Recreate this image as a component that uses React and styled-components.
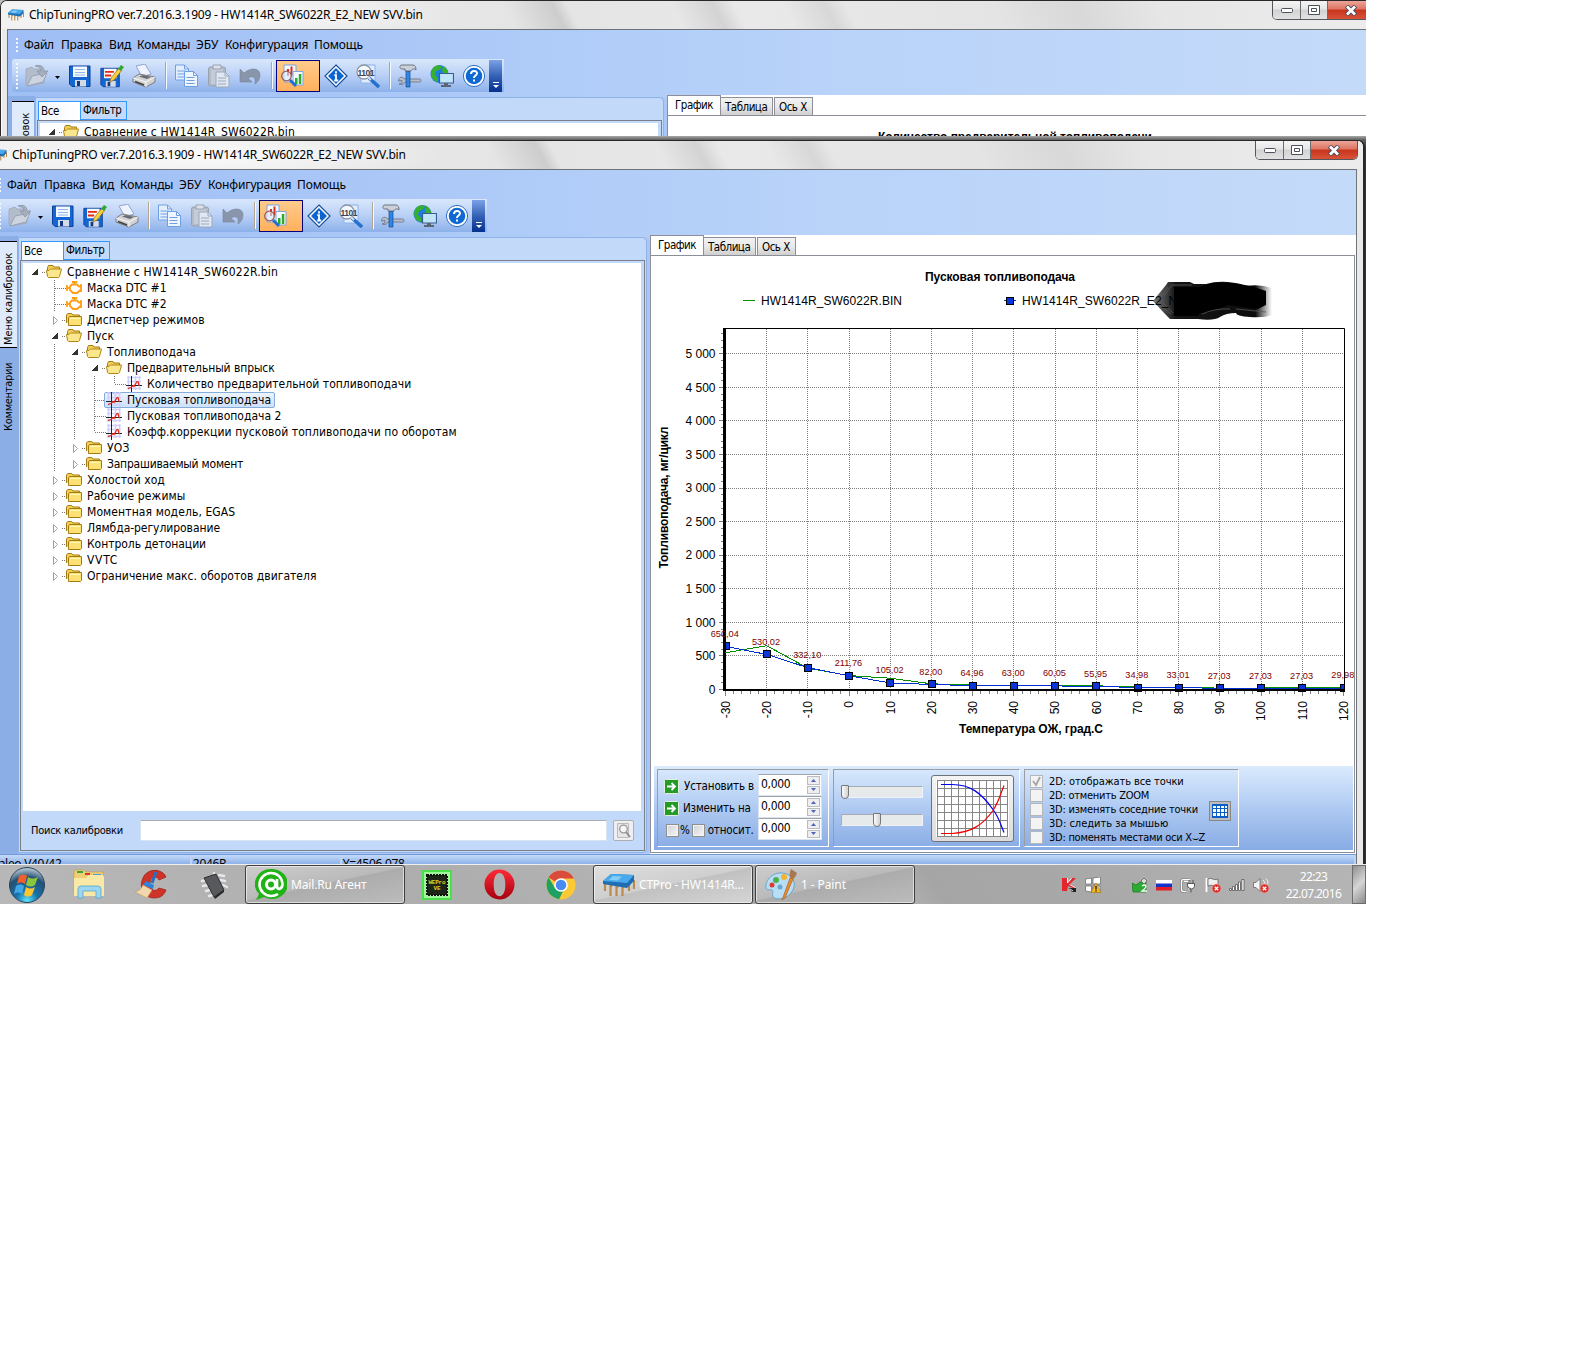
import React from "react";
import styled, { createGlobalStyle, css } from "styled-components";

const tahoma = `"DejaVu Sans Condensed", "DejaVu Sans", sans-serif`;
const segoe = `"Noto Sans", "Open Sans", sans-serif`;
const arial = `"Liberation Sans", Arial, sans-serif`;

const GlobalStyle = createGlobalStyle`
  * { box-sizing: border-box; }
  body {
    margin: 0;
    background: #fff;
    color: #000;
    font: 12px ${tahoma};
  }
  svg { display: block; flex: none; }
`;

const Page = styled.main`
  width: 1592px;
  height: 1360px;
  background: #fff;
`;

const Desktop = styled.div`
  position: relative;
  width: 1366px;
  height: 904px;
  overflow: hidden;
  background: linear-gradient(#bdbdbd 0, #a9a9a9 136px, #5c5c5c 140px, #333 150px);
`;

const BackLayer = styled.div`
  position: absolute;
  left: 0;
  top: 0;
  width: 1366px;
  height: 136px;
  overflow: hidden;
`;

const FrontLayer = styled.div`
  position: absolute;
  left: -17px;
  top: 140px;
  height: 724px;
  overflow: hidden;
`;

const Frame = styled.section`
  width: 1382px;
  height: 740px;
  display: flex;
  flex-direction: column;
  border: 1px solid #2b2628;
  border-right-width: 2px;
  border-radius: 7px 7px 0 0;
  background: #e9e9e9;
  box-shadow: inset 1px 1px 0 #fbfbfb;
  overflow: hidden;
`;

const TitleBar = styled.header`
  height: 28px;
  flex: none;
  display: flex;
  padding-left: 7px;
  font: 12px ${segoe};
  background:
    radial-gradient(ellipse 240px 26px at 220px 14px, rgba(255, 255, 255, 0.75), transparent),
    linear-gradient(62deg, transparent 37%, rgba(0, 0, 0, 0.1) 40.5%, transparent 41.5%,
      transparent 49%, rgba(0, 0, 0, 0.09) 52%, transparent 53.5%, transparent 57%,
      rgba(0, 0, 0, 0.07) 60%, transparent 61.5%, transparent 72%,
      rgba(0, 0, 0, 0.05) 78%, transparent 84%),
    linear-gradient(to right, #f1f1f1, #e4e4e4 40%, #e9e9e9 55%, #e3e3e3 75%, #ececec);

  h1 {
    margin: 0 0 0 5px;
    font: inherit;
    line-height: 28px;
    white-space: nowrap;
    letter-spacing: -0.22px;
  }
  > svg { margin-top: 8px; }
`;

const CaptionButtons = styled.div`
  display: flex;
  margin-left: auto;
  margin-right: 5px;
  height: 19px;
  border: 1px solid #55575f;
  border-top: 0;
  border-radius: 0 0 5px 5px;
  overflow: hidden;
`;

const CaptionButton = styled.span`
  width: ${(p) => p.$width}px;
  display: flex;
  align-items: center;
  justify-content: center;
  border-left: ${(p) => (p.$first ? 0 : "1px solid #6b6b70")};
  background: ${(p) =>
    p.$close
      ? "linear-gradient(#eba598, #dd7461 45%, #c8341c 50%, #d8533a 100%)"
      : "linear-gradient(#f4f4f4, #e6e6e6 45%, #d2d2d2 50%, #e2e2e2)"};
`;

const Client = styled.div`
  flex: 1;
  min-height: 0;
  margin: 0 6px;
  display: flex;
  flex-direction: column;
  border: 1px solid #6f7276;
  border-bottom: 0;
  background: linear-gradient(to right, #9ebef5, #aac7f7 28%, #b9d3f9 62%, #c4daf9);
`;

const MenuBar = styled.nav`
  height: 29px;
  flex: none;
  display: flex;
  align-items: center;
  padding-left: 8px;
  font: 12px ${segoe};
  line-height: 28px;
`;

const MenuItem = styled.a`
  width: ${(p) => p.$width}px;
  white-space: nowrap;
  letter-spacing: ${(p) => p.$tracking || 0}px;
`;

const Grip = styled.i`
  width: 2px;
  height: ${(p) => p.$height}px;
  margin-right: ${(p) => p.$gap}px;
  background: repeating-linear-gradient(#f3f8ff 0 2px, transparent 2px 4px);
`;

const ToolBar = styled.div`
  height: 33px;
  width: 492px;
  flex: none;
  display: flex;
  align-items: center;
  margin-left: 4px;
  padding-left: 4px;
  border-radius: 3px 0 0 3px;
  background: linear-gradient(#d9e7fb, #b9d0f6 50%, #8db1ea);
`;

const Slot = styled.span`
  width: 24px;
  margin-left: ${(p) => p.$gap || 0}px;
  display: flex;
`;

const Divider = styled.i`
  width: 2px;
  height: 27px;
  margin-left: ${(p) => p.$gap}px;
  border-left: 1px solid #b3a58f;
  background: #f4f8ff;
`;

const ActiveTool = styled.span`
  width: 44px;
  height: 32px;
  margin-left: 3px;
  padding: 3px 0 0 3px;
  border: 1px solid #000080;
  background: linear-gradient(#ffcb8c, #ffb05c);
`;

const Overflow = styled.span`
  width: 13px;
  height: 32px;
  margin-left: 3px;
  padding-top: 22px;
  background: linear-gradient(#7ba2e7, #3560b6 50%, #04318f);
`;

const Body = styled.div`
  height: 619px;
  flex: none;
  margin-top: 3px;
  display: grid;
  grid-template-columns: 27px 632px 1fr;
`;

const SideTabs = styled.div`
  padding: 5px 0 0 4px;
  background: #8baee6;
  border-top: 1px solid #9fbff2;
  font-size: 11px;
`;

const SideTab = styled.div`
  width: 22px;
  height: ${(p) => p.$height}px;
  padding-right: 4px;
  padding-bottom: ${(p) => (p.$active ? 9 : 0)}px;
  display: flex;
  align-items: center;
  justify-content: center;
  writing-mode: vertical-rl;
  transform: rotate(180deg);
  white-space: nowrap;
  letter-spacing: ${(p) => (p.$active ? -0.1 : -0.3)}px;
  ${(p) =>
    p.$active &&
    css`
      background: #dfeafa;
      border: solid #000;
      border-width: 1px 0;
    `}
`;

const LeftPanel = styled.div`
  width: 629px;
  height: 616px;
  margin-top: 2px;
  padding: 3px 1px 0;
  display: flex;
  flex-direction: column;
  border: 1px solid #8eb1e6;
  border-radius: 0 5px 4px 0;
  background: #c3d9fa;
  box-shadow: 3px 0 0 #a9c6f4;
`;

const PanelTabs = styled.div`
  height: 19px;
  flex: none;
  display: flex;
  margin-left: 1px;
`;

const PanelTab = styled.span`
  width: ${(p) => p.$width}px;
  padding-left: 2px;
  border: 1px solid #3399ff;
  white-space: nowrap;
  font-size: 11.5px;
  letter-spacing: -0.4px;
  line-height: ${(p) => (p.$active ? 19 : 16)}px;
  border-width: ${(p) => (p.$active ? "1px 0 0 1px" : "1px")};
  background: ${(p) => (p.$active ? "linear-gradient(to right, #f4f9ff, #fff)" : "#c3dafb")};
`;

const PanelBox = styled.div`
  width: 625px;
  height: 591px;
  flex: none;
  padding: 2px 3px 0 2px;
  border: 1px solid #7b8088;
`;

const Tree = styled.div`
  height: 548px;
  padding: 1px 0 0 3px;
  background: #fff;
`;

const TreeRow = styled.div`
  height: 16px;
  display: flex;
`;

const TreeItem = styled.span`
  height: 16px;
  display: flex;
  align-items: center;
  gap: 5px;
  white-space: nowrap;
  letter-spacing: ${(p) => p.$tracking || 0}px;
  ${(p) =>
    p.$selected &&
    css`
      margin-left: -2px;
      padding: 0 3px 0 1px;
      border: 1px solid #84acdd;
      border-radius: 2px;
      background: linear-gradient(#ecf4fd, #cde1fb);
    `}
`;

const Search = styled.label`
  height: 38px;
  display: flex;
  align-items: center;
  padding-left: 8px;
  font-size: 11px;
`;

const SearchCaption = styled.span`
  width: 109px;
  letter-spacing: -0.25px;
`;

const SearchField = styled.span`
  width: 467px;
  height: 21px;
  border: 1px solid #d9e4f3;
  border-top-color: #abadb3;
  background: #fff;
`;

const SearchButton = styled.span`
  width: 21px;
  height: 21px;
  margin-left: 6px;
  padding: 2px;
  border: 1px solid #acafb5;
  border-radius: 2px;
  background: #efefef;
`;

const RightPanel = styled.div`
  display: flex;
  flex-direction: column;
  background: #fff;
`;

const PageTabs = styled.div`
  height: 20px;
  flex: none;
  display: flex;
  align-items: flex-end;
`;

const PageTab = styled.span`
  width: ${(p) => p.$width}px;
  height: ${(p) => (p.$active ? 21 : 18)}px;
  padding-left: ${(p) => (p.$active ? 7 : 4)}px;
  margin-bottom: ${(p) => (p.$active ? -1 : 0)}px;
  margin-right: ${(p) => (p.$active ? 0 : 1)}px;
  border: 1px solid #8c8e98;
  border-bottom: 0;
  border-left-width: ${(p) => (p.$joined ? 0 : 1)}px;
  font-size: 11.5px;
  line-height: ${(p) => (p.$active ? 18 : 19)}px;
  white-space: nowrap;
  letter-spacing: -0.5px;
  background: ${(p) => (p.$active ? "#fff" : "linear-gradient(#f2f2f2, #e9e9e9 50%, #cfcfcf)")};
`;

const TabPage = styled.div`
  width: 705px;
  height: 598px;
  border: 1px solid #8c8e98;
`;

const Controls = styled.div`
  width: 699px;
  height: 84px;
  margin-left: 3px;
  padding: 3px;
  display: flex;
  gap: 4px;
  background: linear-gradient(#dbebfd, #b3cdf3 45%, #87abe4);
`;

const Group = styled.div`
  width: ${(p) => p.$width}px;
  height: 78px;
  padding: ${(p) => p.$padding};
  display: ${(p) => p.$display || "block"};
  border: 1px solid #fff;
  border-top-color: #9a9da3;
  border-left-color: #9a9da3;
`;

const EditRow = styled.div`
  height: 22px;
  display: flex;
  align-items: center;
  font-size: 11.5px;
`;

const EditLabel = styled.span`
  width: 94px;
  padding: 2px 0 0 ${(p) => p.$inset || 0}px;
  display: flex;
  align-items: center;
  white-space: nowrap;
  letter-spacing: -0.15px;
`;

const Caption = styled.span`
  margin-left: ${(p) => p.$gap}px;
`;

const NumberField = styled.span`
  width: 64px;
  height: 22px;
  display: flex;
  justify-content: space-between;
  padding: 1px 1px 1px 2px;
  border: 1px solid #d8e3f2;
  border-top-color: #a0a3a8;
  background: #fff;
  font-size: 12px;
  line-height: 17px;
  letter-spacing: -0.3px;
`;

const Spinner = styled.span`
  width: 13px;
  display: grid;
  grid-template-rows: 1fr 1fr;
  gap: 1px;

  i {
    display: flex;
    align-items: center;
    justify-content: center;
    border: 1px solid #b9bcc2;
    background: #eeeef0;
  }
`;

const Check = styled.i`
  width: 13px;
  height: 13px;
  flex: none;
  border: 1px solid ${(p) => (p.$disabled ? "#b4b6ba" : "#8e8f8f")};
  background: ${(p) =>
    p.$disabled ? "#f3f3f3" : "linear-gradient(135deg, #cfd2d6, #f6f6f6)"};
  box-shadow: inset 0 0 0 1px #f4f4f4;
`;

const Sliders = styled.div`
  width: 90px;
  padding-top: 16px;
  display: grid;
  grid-auto-rows: 28px;
`;

const Track = styled.div`
  width: 82px;
  height: 12px;
  padding-left: ${(p) => p.$value}px;
  border: 1px solid #b3b5b9;
  border-color: #a7abb3 #eef3fa #eef3fa #a7abb3;
  background: #e7eaea;

  i {
    display: block;
    width: 8px;
    height: 14px;
    margin: -2px 0 0 -1px;
    border: 1px solid #777;
    border-radius: 1px 1px 4px 4px;
    background: linear-gradient(to right, #fafafa, #d2d2d2);
  }
`;

const CurveButton = styled.div`
  width: 83px;
  height: 67px;
  margin-top: 5px;
  padding: 4px;
  border: 1px solid #70747a;
  border-radius: 3px;
  background: linear-gradient(#f4f4f4, #dcdcdc);
`;

const Options = styled.div`
  width: 179px;
`;

const Option = styled.div`
  height: 14px;
  display: flex;
  align-items: center;
  gap: 6px;
  font-size: 11px;
  white-space: nowrap;
  letter-spacing: ${(p) => p.$tracking || 0}px;
`;

const GridButton = styled.div`
  width: 22px;
  height: 20px;
  margin-top: 27px;
  padding: 2px 2px;
  border: 1px solid #888;
  background: #bdbdbd;
`;

const StatusBar = styled.footer`
  flex: 1;
  display: flex;
  border-top: 1px solid #7399d8;
  background: linear-gradient(#c4dafa, #88ade7 10px);
  font: 12px ${segoe};
`;

const StatusCell = styled.span`
  width: ${(p) => p.$width}px;
  padding-left: 1px;
  line-height: 17px;
  white-space: nowrap;
  letter-spacing: -0.3px;
  border-right: 2px solid #bcd3f7;
`;

/* ---------- taskbar ---------- */

const TaskBar = styled.footer`
  position: absolute;
  left: 0;
  top: 864px;
  width: 1366px;
  height: 40px;
  display: flex;
  align-items: center;
  border-top: 1px solid #efefef;
  background: linear-gradient(55deg, #b8b8b8, #adadad 30%, #b2b2b2 45%, #a4a4a4 47%, #adadad 66%,
    #a5a5a5 68%, #a8a8a8 78%, #b0b0b0 90%, #b5b5b5);
  color: #fff;
  font: 12px ${segoe};
`;

const Pinned = styled.span`
  margin-left: ${(p) => p.$gap}px;
`;

const TaskButton = styled.span`
  width: 160px;
  height: 39px;
  margin-left: ${(p) => p.$gap}px;
  padding-left: 9px;
  display: flex;
  align-items: center;
  gap: 4px;
  border: 1px solid #3f3f3f;
  border-radius: 3px;
  box-shadow: inset 0 0 0 1px rgba(255, 255, 255, 0.55);
  white-space: nowrap;
  letter-spacing: ${(p) => p.$tracking || 0}px;
  background: ${(p) =>
    p.$active
      ? "linear-gradient(168deg, #dedede, #cfcfcf 48%, #c1c1c1 50%, #d5d5d5)"
      : "linear-gradient(168deg, #cdcdcd, #bababa 48%, #acacac 50%, #bcbcbc)"};
`;

const Tray = styled.div`
  width: ${(p) => p.$width}px;
  margin-left: ${(p) => p.$gap};
  display: flex;
  justify-content: space-between;
`;

const Clock = styled.div`
  width: 83px;
  padding-left: 6px;
  text-align: center;
  line-height: 17px;
  letter-spacing: -0.6px;
`;

const ShowDesktop = styled.div`
  width: 14px;
  height: 39px;
  border: 1px solid #6e6e6e;
  background: linear-gradient(135deg, #8f8f8f, #d5d5d5 50%, #8a8a8a);
`;

/* ---------- icons ---------- */

const Icon = ({ size = 24, box = 24, children }) => (
  <svg width={size} height={size} viewBox={`0 0 ${box} ${box}`}>
    {children}
  </svg>
);

const ChipIcon = ({ size = 16 }) => (
  <svg width={size} height={size * 0.75} viewBox="0 0 32 24">
    <path
      d="M4 11l-2-1v8M9.500 13l-2-1v11M15.500 14l-2-1v10M21.500 14l-2-1v10M27 10l-1-1v9M31 7v9"
      fill="none"
      stroke="#b98a4e"
      strokeWidth="2.200"
    />
    <path d="M8 1l23 1v6l-7 7L0 11V8z" fill="#1f6eb4" />
    <path d="M8 1l23 1-7 8L0 8z" fill="#4aa9ea" />
    <path d="M10 3l9 .5-4 4-9-.5z" fill="#83cdf8" />
  </svg>
);

const OpenIcon = () => (
  <Icon>
    <path d="M1 5l6-2 2 2h8l2 4v10L3 22 1 20z" fill="#b3bccb" stroke="#9aa5b6" strokeWidth=".7" />
    <path d="M2 22L7 12l15-3-4 9z" fill="#ccd4e0" stroke="#98a3b5" />
    <path d="M10 2c6-2 9 1 9 5h4l-6 6-5-6h4c0-3-2-4-6-5z" fill="#a4aebd" stroke="#8791a1" strokeWidth=".7" />
  </Icon>
);

const Disk = () => (
  <>
    <path d="M1.500 2h20.500v20.500H4l-2.500-2.500z" fill="#1467d2" stroke="#0b3f98" />
    <path d="M5 2.500h14v10.500H5z" fill="#f6f9ff" />
    <path d="M7 16h11v6.500H7z" fill="#d4dbe7" />
    <path d="M9 17h3v5H9z" fill="#123a87" />
  </>
);

const SaveIcon = () => (
  <Icon>
    <Disk />
    <path d="M7 5.500h10M7 8.500h10M7 11h10" stroke="#8eb9ed" />
  </Icon>
);

const SaveAsIcon = () => (
  <Icon>
    <g transform="translate(-.5 2.500) scale(.9)">
      <Disk />
      <path d="M6 6h10M6 10h7" stroke="#e42a12" strokeWidth="2" />
    </g>
    <path d="M11 14l8-10 3 2-8 10-4 2z" fill="#f5d13c" stroke="#a06a0e" strokeWidth=".7" />
    <path d="M18 5l3-4 3 2-3 4z" fill="#30a830" />
  </Icon>
);

const PrinterIcon = () => (
  <Icon>
    <path d="M4 2l9-2 6 10-9 3z" fill="#eef3ff" stroke="#8fa3cc" />
    <path d="M1 14l6-4 16 3v5l-9 5-13-5z" fill="#d2d2d4" stroke="#7b7d84" />
    <path d="M1 14l13 4 9-5M14 18v5" fill="none" stroke="#f8f8f8" />
    <path d="M3 17.500l9 3.500" stroke="#444" strokeWidth="1.800" />
    <path d="M7 12.500l8 2.500 4-2-8-2z" fill="#696c74" />
  </Icon>
);

const Sheet = ({ x, y, fill, ink }) => (
  <g transform={`translate(${x} ${y})`}>
    <path d="M0 0h9l4 4v11H0z" fill={fill} stroke={ink} />
    <path d="M9 0v4h4M2 6h8M2 9h8M2 12h8" fill="none" stroke={ink} />
  </g>
);

const CopyIcon = () => (
  <Icon>
    <Sheet x={0.5} y={1} fill="#e3eeff" ink="#6e9fe3" />
    <Sheet x={9.5} y={7.5} fill="#eff5ff" ink="#6e9fe3" />
  </Icon>
);

const PasteIcon = () => (
  <Icon>
    <rect x="2.500" y="3" width="17" height="19" rx="2" fill="#b4bbc8" stroke="#98a1b1" />
    <path d="M5 5h12v15H5z" fill="#c5ccd8" />
    <path d="M7 1h8v4H7z" fill="#dde2ea" stroke="#98a1b1" />
    <Sheet x={10} y={8} fill="#e1e7f0" ink="#9ba8bd" />
  </Icon>
);

const UndoIcon = () => (
  <Icon>
    <path d="M2 5l4 4c7-6 16-5 16 2 0 4-2 7-5 9 1-6-1-9-7-6l4 4H2z" fill="#8995aa" stroke="#77849b" strokeWidth=".6" />
  </Icon>
);

const CompareIcon = () => (
  <Icon>
    <path d="M4 1h12v17H4z" fill="#f6faff" stroke="#7fa5db" />
    <path d="M7 5h2v7H7zM10.500 2.500h2v9h-2z" fill="#de2c1c" />
    <path d="M13 7.500h10V21H13z" fill="#f4faff" stroke="#7fa5db" />
    <path d="M15 14h2.500v6H15zM18.800 10h2.500v10h-2.500z" fill="#2eaa2e" />
    <circle cx="6.500" cy="12" r="4.800" fill="#d7eafd" fillOpacity=".65" stroke="#9a5a52" strokeWidth="1.300" />
    <path d="M10 16l6 6" stroke="#1f6fd4" strokeWidth="3" />
  </Icon>
);

const InfoIcon = () => (
  <Icon>
    <path d="M12 1l11 11-11 11L1 12z" fill="#fff" stroke="#1a4f9c" strokeWidth="1.2" />
    <path d="M12 4l8 8-8 8-8-8z" fill="#0b64cf" />
    <path d="M12 7.2v2.2M10.3 11.2H12v5M10.2 16.5h4" fill="none" stroke="#fff" strokeWidth="1.8" />
  </Icon>
);

const BinarySearchIcon = () => (
  <Icon>
    <path d="M5 1h14v18H5z" fill="#e1edff" stroke="#8db2e8" />
    <circle cx="8" cy="8" r="7" fill="#f4f9ff" stroke="#8c98a8" strokeWidth="1.3" />
    <text x="1.500" y="11.500" fontSize="8.500" fontWeight="bold" fill="#3b4252" textLength="17" fontFamily="Liberation Sans">1101</text>
    <path d="M13 14l10 9" stroke="#2470d0" strokeWidth="3.500" />
    <path d="M12 13l3 3" stroke="#ddd" strokeWidth="2" />
  </Icon>
);

const ToolsIcon = () => (
  <Icon>
    <path d="M.5 17c0-4 4-5 6-2h15c2 0 2 3 0 3H7c-2 4-6 2-6 2l3-1V16.500z" fill="#b7bec9" stroke="#5d6676" strokeWidth=".7" />
    <path d="M8 7h4v16H8z" fill="#2f86e4" stroke="#164b97" strokeWidth=".7" />
    <path d="M3 1h12c2 0 3 2 3 5-2-2-4-1-5 1H7V5H4C2 5 1 3 3 1z" fill="#cbd0d8" stroke="#565e6b" strokeWidth=".8" />
  </Icon>
);

const GlobeIcon = () => (
  <Icon>
    <circle cx="9.500" cy="10" r="9" fill="#1c7de2" />
    <path d="M3 4c4-4 8-3 9-1l-3 3-3 1-1 4 3 3v4C2 17-1 10 3 4zM13 2c4 2 5 5 5 7h-5l-1-3z" fill="#39b02c" />
    <path d="M9.500 9.500h14v9.500h-14z" fill="#bfe4fb" stroke="#3a5f8d" strokeWidth="1.2" />
    <path d="M14 19h4v2h3v2H11v-2h3z" fill="#5c6673" />
  </Icon>
);

const HelpIcon = () => (
  <Icon>
    <circle cx="12" cy="12" r="10.6" fill="#fff" stroke="#2a6fc5" />
    <circle cx="12" cy="12" r="8.3" fill="#1069d2" />
    <path d="M9 10c0-4 6-4 6-.7 0 2.3-3 2-3 4.7M12 15.5v2" fill="none" stroke="#fff" strokeWidth="2" />
  </Icon>
);

const FolderIcon = ({ open }) => (
  <Icon size={16} box={16}>
    {open ? (
      <>
        <path d="M1.500 12V3.500l1-2h4.500l1 1.500h5.500v3" fill="#f0cd58" stroke="#a67c12" />
        <path d="M1.500 12.500L.5 6.500h2.500l1.500-1.500h11l-2 7.500-1 1h-10z" fill="#fae68c" stroke="#b38716" />
      </>
    ) : (
      <>
        <path d="M.5 11V3l1.300-1.500h4L7 3h6.500v2" fill="#f0cf57" stroke="#a67c12" />
        <path d="M2.500 13.500V6l1-1.500h12v8l-1 1z" fill="#fbe272" stroke="#a67c12" />
        <path d="M4 6.500h10" stroke="#fff6c4" />
      </>
    )}
  </Icon>
);

const EngineIcon = () => (
  <Icon size={16} box={16}>
    <path
      d="M1 5v6M1 8h3M6 2h5M8.500 2v2.500M4 6.500l2-2h5l2 2h2M4 6v4l3 3h4l4-3.500V7M15 4v8"
      fill="none"
      stroke="#ff9d14"
      strokeWidth="1.800"
    />
  </Icon>
);

const CurveIcon = () => (
  <Icon size={16} box={16}>
    <path d="M1 1.500h14M1 5.500h14M1 12.500h14M2.500 0v14M9.500 0v14M13.500 0v14" stroke="#cfd0fb" strokeWidth="1.500" />
    <path d="M0 9.500h16M5.500 0v16" stroke="#222" />
    <path d="M2 12.500l3-1 2-2 1 1 3-5h1l1 4h1" fill="none" stroke="#e8220f" strokeWidth="1.200" />
  </Icon>
);

const icons = {
  open: <FolderIcon open />,
  closed: <FolderIcon />,
  engine: <EngineIcon />,
  curve: <CurveIcon />,
};

const Guide = ({ line, leaf, last, state }) => (
  <svg width="20" height="16" viewBox="0 0 20 16" shapeRendering="crispEdges">
    {(line || leaf) && (
      <path d={`M8.500 0V${last ? 8 : 16}`} stroke="#777" strokeDasharray="1 1" />
    )}
    {leaf && <path d="M9 8.500h11" stroke="#777" strokeDasharray="1 1" />}
    {state && <path d="M16 8.500h4" stroke="#777" strokeDasharray="1 1" />}
    {state === "open" && <path d="M11.500 5v6h-6z" fill="#333" />}
    {state === "closed" && (
      <path d="M7.500 4.500l4 4-4 4z" fill="#fff" stroke="#a0a0a0" shapeRendering="auto" />
    )}
  </svg>
);

/* ---------- tree ---------- */

const tree = [
  [0, "open", "Сравнение с HW1414R_SW6022R.bin", { tracking: 0.16 }],
  [1, "engine", "Маска DTC #1"],
  [1, "engine", "Маска DTC #2"],
  [1, "closed", "Диспетчер режимов", { tracking: 0.1 }],
  [1, "open", "Пуск"],
  [2, "open", "Топливоподача", { tracking: 0.08 }],
  [3, "open", "Предварительный впрыск", { tracking: -0.08 }],
  [4, "curve", "Количество предварительной топливоподачи", { last: true, tracking: 0.03 }],
  [3, "curve", "Пусковая топливоподача", { selected: true }],
  [3, "curve", "Пусковая топливоподача 2"],
  [3, "curve", "Коэфф.коррекции пусковой топливоподачи по оборотам", { last: true, tracking: 0.08 }],
  [2, "closed", "УОЗ", { tracking: 0.2 }],
  [2, "closed", "Запрашиваемый момент", { tracking: -0.22 }],
  [1, "closed", "Холостой ход", { tracking: 0.05 }],
  [1, "closed", "Рабочие режимы", { tracking: 0.12 }],
  [1, "closed", "Моментная модель, EGAS", { tracking: 0.1 }],
  [1, "closed", "Лямбда-регулирование", { tracking: -0.05 }],
  [1, "closed", "Контроль детонации", { tracking: -0.04 }],
  [1, "closed", "VVTC", { tracking: 0.7 }],
  [1, "closed", "Ограничение макс. оборотов двигателя", { tracking: 0.03 }],
];

const TreeNode = ({ level, kind, label, selected, last, tracking }) => {
  const isFolder = kind === "open" || kind === "closed";
  return (
    <TreeRow>
      {Array.from({ length: level }, (_, i) => (
        <Guide key={i} line={i > 0} />
      ))}
      <Guide leaf={!isFolder} last={last} state={isFolder && kind} />
      <TreeItem $selected={selected} $tracking={tracking}>
        {icons[kind]}
        {label}
      </TreeItem>
    </TreeRow>
  );
};

/* ---------- chart ---------- */

const temperatures = Array.from({ length: 16 }, (_, i) => i * 10 - 30);
const edited = [
  650.04, 530.02, 332.1, 211.76, 105.02, 82, 64.96, 63, 60.05, 55.95, 34.98, 33.01, 27.03, 27.03,
  27.03, 29.98,
];
const original = [555, 660, 325, 215, 175, 92, 75, 63, 61, 62, 46, 34, 29, 29, 44, 44];

const px = (i) => 725.5 + i * 41.2;
const py = (v) => 689.5 - (v / 500) * 33.57;
const line = (values) => values.map((v, i) => `${px(i)},${py(v) + 0.5}`).join(" ");
const thousands = (v) =>
  v >= 1000 ? `${Math.floor(v / 1000)} ${String(v % 1000).padStart(3, "0")}` : v;

const Chart = () => (
  <svg width="703" height="510" viewBox="651 256 703 510" fontFamily={arial} fontSize="12">
    <text x="1000" y="281" textAnchor="middle" fontWeight="bold" textLength="150">
      Пусковая топливоподача
    </text>
    <path d="M743 300.500h12" stroke="#009000" />
    <text x="761" y="305" textLength="141">HW1414R_SW6022R.BIN</text>
    <path d="M1004 300.500h12" stroke="#0030d0" />
    <rect x="1006.5" y="297.500" width="7" height="7" fill="#0a35d8" stroke="#000" />
    <Scribble />
    <text x="1022" y="305" textLength="225">HW1414R_SW6022R_E2_NEW SVV.BIN</text>

    <g stroke="#808080" strokeDasharray="1 1" shapeRendering="crispEdges">
      {temperatures.slice(1, -1).map((t, i) => (
        <path key={t} d={`M${Math.floor(px(i + 1)) + 0.5} 329V689`} />
      ))}
      {Array.from({ length: 10 }, (_, i) => (
        <path key={i} d={`M726 ${Math.floor(py((i + 1) * 500)) + 0.5}H1344`} />
      ))}
    </g>
    <g stroke="#808080" shapeRendering="crispEdges">
      {Array.from({ length: 76 }, (_, i) => (
        <path key={i} d={`M${Math.floor(px(i / 5)) + 0.5} 690v${i % 5 ? 4 : 6}`} />
      ))}
      {Array.from({ length: 54 }, (_, i) => (
        <path key={i} d={`M724 ${Math.floor(py(i * 100)) + 0.5}h${i % 5 ? -3 : -5}`} />
      ))}
    </g>
    <path d="M724 328.500h620.500V690" fill="none" stroke="#000" />
    <path d="M724.500 328v362.500" stroke="#000" strokeWidth="3" />

    <g fill="none" shapeRendering="crispEdges">
      <polyline points={line(original)} stroke="#009000" />
      <polyline points={line(edited)} stroke="#0030d0" />
    </g>
    {edited.map((v, i) => (
      <g key={i}>
        <rect
          x={Math.round(px(i)) - 3.5 + (i === 0 ? 3 : 0)}
          y={Math.ceil(py(v)) - 3.5}
          width={i === 0 || i === 15 ? 4 : 7}
          height="7"
          fill="#0a35d8"
          stroke="#000"
        />
        <text x={px(i) - 0.7} y={py(v) - 9} textAnchor="middle" fontSize="9.200" fill="#800000">
          {v.toFixed(2).replace(".", ",")}
        </text>
      </g>
    ))}
    <path d="M723 690h622" stroke="#000" strokeWidth="2" />

    {Array.from({ length: 11 }, (_, i) => (
      <text key={i} x="715.5" y={py(i * 500) + 4.2} textAnchor="end">
        {thousands(i * 500)}
      </text>
    ))}
    {temperatures.map((t, i) => (
      <text key={t} transform={`translate(${px(i) + 4.3} 701) rotate(-90)`} textAnchor="end">
        {t}
      </text>
    ))}
    <text x="1031" y="733" textAnchor="middle" fontWeight="bold" textLength="144">
      Температура ОЖ, град.С
    </text>
    <text transform="translate(668 497.500) rotate(-90)" textAnchor="middle" fontWeight="bold" textLength="142">
      Топливоподача, мг/цикл
    </text>
  </svg>
);

const Scribble = () => (
  <g>
    <defs>
      <linearGradient id="fade">
        <stop offset="0" stopColor="#555" stopOpacity=".8" />
        <stop offset=".12" stopColor="#3a3a3a" />
        <stop offset=".19" stopColor="#141414" />
        <stop offset=".86" stopColor="#0c0c0c" />
        <stop offset="1" stopColor="#333" stopOpacity="0" />
      </linearGradient>
    </defs>
    <path
      d="M1153 301l13-16 2-3h22l4 2h12q10-3 22-2t18 4q14-2 26 2v27q-8 3-22 2t-14-4q-10 0-16 4t-22 2h-28l-5-5z"
      fill="url(#fade)"
    />
    <path d="M1174 287h26q12-6 30-4t24 4l12 4v14l-8 4-30-4-20 8h-8l-2 3h-24z" fill="#000" />
    <path
      d="M1158 301l10-14M1158 303l13 11M1163 303l10 10M1164 296l8-11h20M1202 314q14-6 28-5M1236 309l30 3"
      fill="none"
      stroke="#5a5a5a"
      strokeWidth=".8"
    />
  </g>
);

const CurvePreview = () => (
  <svg width="73" height="57" viewBox="0 0 73 57">
    <path d="M0 0h73v57H0z" fill="#fff" />
    <path
      d="M1.500 0v57M8.500 0v57M15.500 0v57M22.500 0v57M29.500 0v57M36.500 0v57M43.500 0v57M50.500 0v57M57.500 0v57M64.500 0v57M71.500 0v57M1 .5h71M1 8.500h71M1 16.500h71M1 24.500h71M1 32.500h71M1 40.500h71M1 48.500h71M1 56.500h71"
      stroke="#868686"
    />
    <path d="M5 4.500h11c18 0 29 8 41 25 6 8 8 16 11 23" fill="none" stroke="#0000f0" strokeWidth="1.200" />
    <path d="M5 53.500h11c20-1 31-9 41-23 6-9 8-18 11-25" fill="none" stroke="#f00000" strokeWidth="1.200" />
  </svg>
);

const GoIcon = () => (
  <svg width="15" height="15" viewBox="0 0 15 15">
    <rect x=".5" y=".5" width="14" height="14" rx="1" fill="#259b27" stroke="#e1f0df" />
    <path d="M3 7.500h8M7.500 4l3.500 3.500L7.500 11" fill="none" stroke="#fff" strokeWidth="1.800" />
  </svg>
);

const ZeroField = () => (
  <NumberField>
    0,000
    <Spinner>
      <i><svg width="5" height="3"><path d="M0 3l2.500-3L5 3z" fill="#4d65b4" /></svg></i>
      <i><svg width="5" height="3"><path d="M0 0l2.500 3L5 0z" fill="#4d65b4" /></svg></i>
    </Spinner>
  </NumberField>
);

const options = [
  ["2D: отображать все точки", -0.1],
  ["2D: отменить ZOOM", -0.25],
  ["3D: изменять соседние точки", -0.22],
  ["3D: следить за мышью", 0],
  ["3D: поменять местами оси X⌣Z", -0.25],
];

const ControlPanel = () => (
  <Controls>
    <Group $width={172} $padding="4px 0 0 6px">
      <EditRow>
        <EditLabel><GoIcon /><Caption $gap={5}>Установить в</Caption></EditLabel>
        <ZeroField />
      </EditRow>
      <EditRow>
        <EditLabel><GoIcon /><Caption $gap={4}>Изменить на</Caption></EditLabel>
        <ZeroField />
      </EditRow>
      <EditRow>
        <EditLabel $inset={2}>
          <Check />
          <Caption $gap={1}>%</Caption>
          <Caption $gap={2}><Check as="div" /></Caption>
          <Caption $gap={3}>относит.</Caption>
        </EditLabel>
        <ZeroField />
      </EditRow>
    </Group>
    <Group $width={187} $padding="0 0 0 7px" $display="flex">
      <Sliders>
        <Track $value={0}><i /></Track>
        <Track $value={32}><i /></Track>
      </Sliders>
      <CurveButton><CurvePreview /></CurveButton>
    </Group>
    <Group $width={215} $padding="4px 0 0 5px" $display="flex">
      <Options>
        {options.map(([label, tracking], i) => (
          <Option key={label} $tracking={tracking}>
            <Check $disabled>
              {i === 0 && (
                <svg width="11" height="11">
                  <path d="M2 5l3 4 4-8" fill="none" stroke="#a5a5a5" strokeWidth="1.800" />
                </svg>
              )}
            </Check>
            {label}
          </Option>
        ))}
      </Options>
      <GridButton>
        <svg width="16" height="14" viewBox="0 0 16 14">
          <path d="M0 0h16v14H0z" fill="#0b5ec9" />
          <path
            d="M1 2h3v2H1zm4 0h3v2H5zm4 0h3v2H9zm4 0h2v2h-2zM1 5h3v3H1zm4 0h3v3H5zm4 0h3v3H9zm4 0h2v3h-2zM1 9h3v3H1zm4 0h3v3H5zm4 0h3v3H9zm4 0h2v3h-2z"
            fill="#fff"
          />
        </svg>
      </GridButton>
    </Group>
  </Controls>
);

const BackTitle = () => (
  <svg width="703" height="60" viewBox="651 256 703 60" fontFamily={arial} fontSize="12">
    <text x="998" y="281" textAnchor="middle" fontWeight="bold" textLength="274">
      Количество предварительной топливоподачи
    </text>
  </svg>
);

/* ---------- program window ---------- */

const menu = [
  ["Файл", 37, -0.3],
  ["Правка", 48, -0.2],
  ["Вид", 28, -0.1],
  ["Команды", 59, -0.1],
  ["ЭБУ", 29, -0.1],
  ["Конфигурация", 89, -0.15],
  ["Помощь", 50, -0.1],
];

const Toolbar = () => (
  <ToolBar>
    <Grip $height={26} $gap={7} />
    <Slot><OpenIcon /></Slot>
    <Slot $gap={5}>
      <svg width="8" height="24"><path d="M1 12h5l-2.500 3z" /></svg>
    </Slot>
    <Slot $gap={-10}><SaveIcon /></Slot>
    <Slot $gap={8}><SaveAsIcon /></Slot>
    <Slot $gap={8}><PrinterIcon /></Slot>
    <Divider $gap={9} />
    <Slot $gap={8}><CopyIcon /></Slot>
    <Slot $gap={7}><PasteIcon /></Slot>
    <Slot $gap={8}><UndoIcon /></Slot>
    <Divider $gap={9} />
    <ActiveTool><CompareIcon /></ActiveTool>
    <Slot $gap={4}><InfoIcon /></Slot>
    <Slot $gap={8}><BinarySearchIcon /></Slot>
    <Divider $gap={9} />
    <Slot $gap={7}><ToolsIcon /></Slot>
    <Slot $gap={8}><GlobeIcon /></Slot>
    <Slot $gap={8}><HelpIcon /></Slot>
    <Overflow>
      <svg width="13" height="8"><path d="M4 .5h6" stroke="#fff" /><path d="M4 3h6L7 6z" fill="#fff" /></svg>
    </Overflow>
  </ToolBar>
);

const ProgramWindow = ({ rows, chart, full }) => (
  <Frame>
    <TitleBar>
      <ChipIcon />
      <h1>ChipTuningPRO ver.7.2016.3.1909 - HW1414R_SW6022R_E2_NEW SVV.bin</h1>
      <CaptionButtons>
        <CaptionButton $width={27} $first>
          <svg width="12" height="5"><rect x=".5" y=".5" width="11" height="4" rx="1" fill="#fff" stroke="#4c4f5c" /></svg>
        </CaptionButton>
        <CaptionButton $width={27}>
          <svg width="12" height="10"><path d="M.5.5h11v9H.5zM3.500 3.500h5v3h-5z" fill="#fff" stroke="#4c4f5c" /></svg>
        </CaptionButton>
        <CaptionButton $width={47} $close>
          <svg width="12" height="11">
            <path d="M1.500 1l9 9M10.500 1l-9 9" stroke="#4a4c5c" strokeWidth="4.500" />
            <path d="M2 1.500l8 8M10 1.500l-8 8" stroke="#fff" strokeWidth="2.700" />
          </svg>
        </CaptionButton>
      </CaptionButtons>
    </TitleBar>
    <Client>
      <MenuBar>
        <Grip $height={14} $gap={6} />
        {menu.map(([label, width, tracking]) => (
          <MenuItem key={label} $width={width} $tracking={tracking}>{label}</MenuItem>
        ))}
      </MenuBar>
      <Toolbar />
      <Body>
        <SideTabs>
          <SideTab $active $height={107}>Меню калибровок</SideTab>
          {full && <SideTab $height={98}>Комментарии</SideTab>}
        </SideTabs>
        <LeftPanel>
          <PanelTabs>
            <PanelTab $active $width={42}>Все</PanelTab>
            <PanelTab $width={47}>Фильтр</PanelTab>
          </PanelTabs>
          <PanelBox>
            <Tree>
              {rows.map(([level, kind, label, extra]) => (
                <TreeNode key={label} level={level} kind={kind} label={label} {...extra} />
              ))}
            </Tree>
            {full && (
              <Search>
                <SearchCaption>Поиск калибровки</SearchCaption>
                <SearchField />
                <SearchButton>
                  <svg width="15" height="15" viewBox="0 0 15 15">
                    <path d="M1.500.5h11v14h-11z" fill="#e6e6e6" stroke="#bbb" />
                    <circle cx="7.500" cy="6" r="3.800" fill="#f7f7f7" stroke="#999" strokeWidth="1.300" />
                    <path d="M10 9l4 5" stroke="#8f8f8f" strokeWidth="2" />
                  </svg>
                </SearchButton>
              </Search>
            )}
          </PanelBox>
        </LeftPanel>
        <RightPanel>
          <PageTabs>
            <PageTab $active $width={54}>График</PageTab>
            <PageTab $joined $width={52}>Таблица</PageTab>
            <PageTab $width={39}>Ось X</PageTab>
          </PageTabs>
          <TabPage>
            {chart}
            {full && <ControlPanel />}
          </TabPage>
        </RightPanel>
      </Body>
      {full && (
        <StatusBar>
          <StatusCell $width={201}>Valeo V40/42</StatusCell>
          <StatusCell $width={150}>2046R</StatusCell>
          <StatusCell $width={1015}>Y=4506,078</StatusCell>
        </StatusBar>
      )}
    </Client>
  </Frame>
);

/* ---------- taskbar icons ---------- */

const StartOrb = () => (
  <Icon size={38} box={38}>
    <defs>
      <radialGradient id="orb" cx=".5" cy=".95" r=".9">
        <stop offset="0" stopColor="#5fe4ff" />
        <stop offset=".35" stopColor="#1673ad" />
        <stop offset=".75" stopColor="#245073" />
        <stop offset="1" stopColor="#a9bccb" />
      </radialGradient>
    </defs>
    <circle cx="19" cy="19" r="17.500" fill="url(#orb)" stroke="#28445c" />
    <path d="M11 10c3-2 5-2 8 0l-2 8c-3-2-5-2-8 0z" fill="#f1602c" />
    <path d="M20 11c3 2 6 2 10 0l-3 8c-3 2-6 2-9 0z" fill="#8cc63c" />
    <path d="M8 20c3-2 5-2 8 0l-2 8c-3-2-5-2-8 0z" fill="#43a6e6" />
    <path d="M18 21c3 2 6 2 9 0l-3 8c-3 2-5 2-8 0z" fill="#fdc52c" />
  </Icon>
);

const ExplorerIcon = () => (
  <Icon size={32} box={32}>
    <path d="M1 3l1-2h9l2 2h17v22H1z" fill="#f0cf72" stroke="#c39e45" strokeWidth=".6" />
    <path d="M4 2h6v2H4z" fill="#38a545" />
    <path d="M12 4h5v2h-5z" fill="#d33" />
    <path d="M20 5h8v3h-8z" fill="#4b9ce0" />
    <path d="M1 9h12l3-3h14l1 2v19H1z" fill="#fae8a6" />
    <path d="M5 29V20q0-3 3-3h17q3 0 3 3v9h-5v-7H10v7z" fill="#9cd7f2" stroke="#57a5cd" strokeWidth=".8" />
  </Icon>
);

const CleanerIcon = () => (
  <Icon size={32} box={32}>
    <path d="M31 8C27-1 12-1 8 9c-5 11 2 20 11 20 7 0 10-3 12-8l-7-2c-3 4-8 3-9-3-1-7 6-11 9-5z" fill="#cf3226" stroke="#9b1b14" strokeWidth=".7" />
    <path d="M17 14l4-11" stroke="#2470c4" strokeWidth="3" />
    <path d="M11 12l8 4-1 4-10-4z" fill="#2b85dc" />
    <path d="M8 16l9 5-5 8-12-6c4-1 7-4 8-7z" fill="#f2d6ad" stroke="#c39b63" strokeWidth=".6" />
  </Icon>
);

const BlackChipIcon = () => (
  <Icon size={28} box={28}>
    <path
      d="M2 10l5-1M3 15l5-1M6 20l4-1M9 25l4-1M14 2l2 3M19 4l5 1M21 9l4 1M23 14l4 2"
      stroke="#e8e8e8"
      strokeWidth="2.500"
      strokeLinecap="round"
    />
    <path d="M4 7l12-4 8 16-10 7z" fill="#58595c" stroke="#2d2d2f" />
    <path d="M14 26l10-7v2l-9 7z" fill="#2a2a2c" />
  </Icon>
);

const AgentIcon = () => (
  <Icon size={32} box={32}>
    <path d="M16 0a16 15 0 1 1-7 28L1 31l3-6A16 15 0 0 1 16 0z" fill="#21b316" />
    <g fill="none" stroke="#fff">
      <circle cx="16" cy="15.500" r="4.500" strokeWidth="3" />
      <path d="M22 10v7q0 3 2.500 3 3-1 3-5C27 8 22 4 16 4S4.500 9 4.500 15.500 10 27 16 27q4 0 7-2" strokeWidth="2.600" />
    </g>
  </Icon>
);

const WeproIcon = () => (
  <Icon size={32} box={32}>
    <path d="M1 1h30v30H1z" fill="#4be04b" />
    <path d="M3 3h26v26H3z" fill="#a0f79c" />
    <path d="M6 6h20v20H6z" fill="#1d2418" stroke="#111" strokeDasharray="2 1" strokeWidth="2" />
    <text x="16" y="15" fill="#d9d326" textAnchor="middle" fontFamily="Liberation Mono" fontWeight="bold" fontSize="6" textLength="17">WEPro</text>
    <text x="16" y="21" fill="#d9d326" textAnchor="middle" fontFamily="Liberation Mono" fontWeight="bold" fontSize="6">VE</text>
  </Icon>
);

const OperaIcon = () => (
  <Icon size={31} box={32}>
    <defs>
      <linearGradient id="opera" x2="0" y2="1"><stop stopColor="#ff2a36" /><stop offset="1" stopColor="#a50010" /></linearGradient>
    </defs>
    <path fillRule="evenodd" d="M16 .5a15.500 15.500 0 1 0 0 31 15.500 15.500 0 1 0 0-31zm0 3.500c4 0 6 5 6 12s-2 12-6 12-6-5-6-12 2-12 6-12z" fill="url(#opera)" />
  </Icon>
);

const ChromeIcon = () => (
  <Icon size={30} box={30}>
    <circle cx="15" cy="15" r="14.500" fill="#fbc936" />
    <path d="M15 15L2.500 7.500A14.500 14.500 0 0 1 28 8.500H15z" fill="#db4b3c" />
    <path d="M15 15l-3 14A14.500 14.500 0 0 1 2.500 7.500L9 18z" fill="#1da261" />
    <path d="M9 17l8 4-4 8.500-6-5z" fill="#1da261" />
    <circle cx="15" cy="15" r="6.800" fill="#fff" />
    <circle cx="15" cy="15" r="5.300" fill="#4a8af4" />
  </Icon>
);

const PaintIcon = () => (
  <Icon size={32} box={32}>
    <path d="M14 4C6 5 0 12 1 19c1 3 4 1 6 2 2 2-1 5 2 8 7 3 18-2 20-11C31 9 23 3 14 4z" fill="#b8def5" stroke="#6aa4cc" />
    <circle cx="11" cy="11" r="3" fill="#4cb04c" />
    <circle cx="19" cy="8" r="3" fill="#f5b22c" />
    <circle cx="7" cy="16" r="2.500" fill="#dc3b31" />
    <circle cx="15" cy="18" r="2.500" fill="#6ba8cf" />
    <path d="M17 31l8-22 3 1-8 19z" fill="#e98a2d" stroke="#a65a14" strokeWidth=".6" />
    <path d="M25 9c-1-4 0-6 1-9l6 4c-1 2-1 4-4 6z" fill="#a87850" />
  </Icon>
);

const Badge = () => (
  <>
    <circle cx="11.500" cy="11.500" r="4.500" fill="#d8322b" stroke="#f4c8c4" strokeWidth=".5" />
    <path d="M9.800 9.800l3.400 3.400M13.200 9.800l-3.400 3.400" stroke="#fff" strokeWidth="1.300" />
  </>
);

const TaskBarView = () => (
  <TaskBar>
    <Pinned $gap={8}><StartOrb /></Pinned>
    <Pinned $gap={27}><ExplorerIcon /></Pinned>
    <Pinned $gap={30}><CleanerIcon /></Pinned>
    <Pinned $gap={33}><BlackChipIcon /></Pinned>
    <TaskButton $gap={17} $tracking={-0.15}><AgentIcon />Mail.Ru Агент</TaskButton>
    <Pinned $gap={16}><WeproIcon /></Pinned>
    <Pinned $gap={31}><OperaIcon /></Pinned>
    <Pinned $gap={31}><ChromeIcon /></Pinned>
    <TaskButton $gap={17} $active $tracking={-0.2}><ChipIcon size={32} />CTPro - HW1414R...</TaskButton>
    <TaskButton $gap={2} $tracking={-0.1}><PaintIcon />1 - Paint</TaskButton>
    <Tray $width={40} $gap="auto">
      <Icon size={16} box={16}>
        <path d="M1 1h5v5l5-5h4L9 7l6 3-3 1-5-2-1 5H1z" fill="#e4252c" />
        <path d="M6.500 1v5l4-4.500M8.500 7.500l6 3" fill="none" stroke="#fff" />
        <path d="M8 11h7v4h-4z" fill="#222" />
        <path d="M9 12l3 2" stroke="#ddd" />
      </Icon>
      <Icon size={16} box={16}>
        <path d="M.5 2l6-1v6h-6zM8 1l7.500-1v7H8zM.5 9h6v6l-6-1zM8 9h7v6H8z" fill="#fff" stroke="#666" strokeWidth=".7" />
        <path d="M11 6l5 9.500H6z" fill="#f8b923" stroke="#9a6a05" strokeWidth=".5" />
        <path d="M11 9v3.500M11 13.300v1.200" stroke="#222" strokeWidth="1.400" />
      </Icon>
    </Tray>
    <Tray $width={137} $gap="31px">
      <Icon size={16} box={16}>
        <path d="M0 6l4 2 4-3h6v10H1z" fill="#2cab32" stroke="#147218" strokeWidth=".7" />
        <path d="M9 4l3-3 3 3-3 3z" fill="#ddd" stroke="#555" strokeWidth=".7" />
        <path d="M10 9q3-2 4 0 0 2-4 5h5" fill="none" stroke="#fff" strokeWidth="1.300" />
      </Icon>
      <Icon size={16} box={16}>
        <path d="M0 3h16v4H0z" fill="#fff" />
        <path d="M0 6.500h16V10H0z" fill="#1732c8" />
        <path d="M0 10h16v3.500H0z" fill="#e01f26" />
      </Icon>
      <Icon size={16} box={16}>
        <path d="M6.500 14.500h-3q-2 0-2-2v-8q0-2 2-2h7M4 4.500h5v8" fill="none" stroke="#666" strokeWidth="2.600" />
        <path d="M6.500 14.500h-3q-2 0-2-2v-8q0-2 2-2h7M4 4.500h5v8" fill="none" stroke="#fff" strokeWidth="1.500" />
        <path d="M7.500 6.500h7v3q-1 2.500-3 2.500-3-.5-4-3zM9 3v4M13 3v4M11 12v3.500" fill="#fff" stroke="#555" strokeWidth="1" />
      </Icon>
      <Icon size={16} box={16}>
        <path d="M1.500 1v14" stroke="#fff" strokeWidth="1.800" />
        <path d="M3 2c4-2 5 2 10 0v6c-4 2-6-1-10 1z" fill="#eee" stroke="#555" strokeWidth=".7" />
        <Badge />
      </Icon>
      <Icon size={16} box={16}>
        <path d="M.5 11.500h2v2h-2zM3.500 9.500h2v4h-2zM6.500 7.500h2v6h-2zM9.500 5h2v8.500h-2zM12.800 2.500h2.200v11h-2.200z" fill="#fff" stroke="#555" strokeWidth=".8" />
      </Icon>
      <Icon size={16} box={16}>
        <path d="M.5 5.500h2.500L7 1.500v13L3 10.500H.5z" fill="#f5f5f5" stroke="#666" strokeWidth=".8" />
        <path d="M10 3q2 2 2 4M13 1.500q2.500 2 2 6" fill="none" stroke="#eee" />
        <Badge />
      </Icon>
    </Tray>
    <Clock>
      <div>22:23</div>
      <div>22.07.2016</div>
    </Clock>
    <ShowDesktop />
  </TaskBar>
);

const App = () => (
  <Page>
    <GlobalStyle />
    <Desktop>
      <BackLayer>
        <ProgramWindow rows={tree.slice(0, 1)} chart={<BackTitle />} />
      </BackLayer>
      <FrontLayer>
        <ProgramWindow rows={tree} chart={<Chart />} full />
      </FrontLayer>
      <TaskBarView />
    </Desktop>
  </Page>
);

export default App;
